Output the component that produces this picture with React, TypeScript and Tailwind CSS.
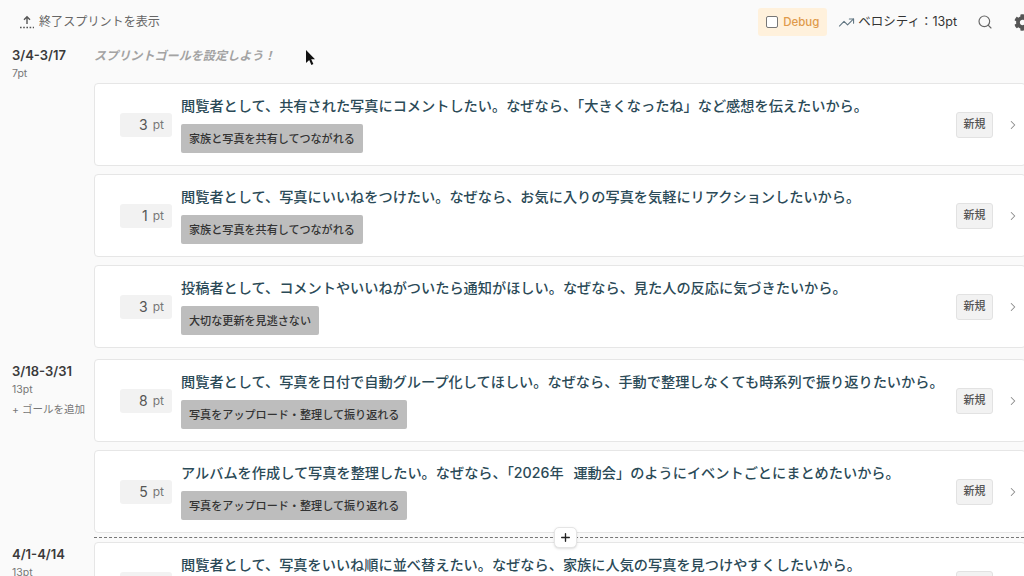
import { ChevronRight, Plus, Search, TrendingUp } from "lucide-react";
import { FaCog } from "react-icons/fa";

const FONT = "font-['Inter','Noto_Sans_CJK_JP',sans-serif]";

type Story = { pt: number; title: string; epic: string };
type Sprint = { range: string; total: string; goal?: string; addGoal?: boolean; stories: Story[] };

const FAMILY = "家族と写真を共有してつながれる";
const UPLOAD = "写真をアップロード・整理して振り返れる";

const sprints: Sprint[] = [
  {
    range: "3/4-3/17",
    total: "7pt",
    goal: "スプリントゴールを設定しよう！",
    stories: [
      { pt: 3, title: "閲覧者として、共有された写真にコメントしたい。なぜなら、「大きくなったね」など感想を伝えたいから。", epic: FAMILY },
      { pt: 1, title: "閲覧者として、写真にいいねをつけたい。なぜなら、お気に入りの写真を気軽にリアクションしたいから。", epic: FAMILY },
      { pt: 3, title: "投稿者として、コメントやいいねがついたら通知がほしい。なぜなら、見た人の反応に気づきたいから。", epic: "大切な更新を見逃さない" },
    ],
  },
  {
    range: "3/18-3/31",
    total: "13pt",
    addGoal: true,
    stories: [
      { pt: 8, title: "閲覧者として、写真を日付で自動グループ化してほしい。なぜなら、手動で整理しなくても時系列で振り返りたいから。", epic: UPLOAD },
      { pt: 5, title: "アルバムを作成して写真を整理したい。なぜなら、「2026年 運動会」のようにイベントごとにまとめたいから。", epic: UPLOAD },
    ],
  },
  {
    range: "4/1-4/14",
    total: "13pt",
    stories: [
      { pt: 3, title: "閲覧者として、写真をいいね順に並べ替えたい。なぜなら、家族に人気の写真を見つけやすくしたいから。", epic: FAMILY },
    ],
  },
];

function StoryCard({ story }: { story: Story }) {
  return (
    <div className="flex h-[83px] w-[932px] shrink-0 items-center rounded-[4px] border border-[#e6e6e6] bg-white pl-[25px] pr-[5px]">
      <div className="flex h-[24px] w-[52px] shrink-0 items-center justify-end gap-[5px] rounded-[3px] bg-[#f2f2f2] pr-[8px] text-[#555]">
        <span className="text-[14px]">{story.pt}</span>
        <span className="text-[12px] text-[#777]">pt</span>
      </div>
      <div className="ml-[9px] flex min-w-0 flex-1 flex-col items-start gap-[8px]">
        <p className="whitespace-nowrap text-[14.2px] leading-[20px] font-medium text-[#2b4a57] [word-spacing:6px]">{story.title}</p>
        <span className="rounded-[2px] bg-[#bdbdbd] px-[8px] py-[6.5px] text-[11.1px] leading-[16px] font-medium text-[#333]">
          {story.epic}
        </span>
      </div>
      <span className="flex h-[26px] w-[37px] shrink-0 items-center justify-center rounded-[3px] border border-[#e2e2e2] bg-[#f2f2f2] text-[11px] font-medium text-[#555]">
        新規
      </span>
      <ChevronRight className="ml-[13px] h-[14px] w-[14px] shrink-0 text-[#8a8a8a]" strokeWidth={1.75} />
    </div>
  );
}

function SprintRow({ sprint }: { sprint: Sprint }) {
  return (
    <section className="flex last:-mt-[2px]">
      <div className={`w-[94px] shrink-0 pl-[12px] ${sprint.goal ? "" : "pt-[2px]"}`}>
        <div className="text-[13px] leading-[20px] font-semibold text-[#3a3a3a]">{sprint.range}</div>
        <div className="mt-[1px] text-[10.5px] leading-[16px] text-[#777]">{sprint.total}</div>
        {sprint.addGoal && <div className="mt-[4px] text-[10.5px] leading-[16px] text-[#777]">+ ゴールを追加</div>}
      </div>
      <div className="flex flex-col gap-[8px]">
        {sprint.goal && (
          <div className="mb-[3px] h-[27px] pt-[3px] text-[12.1px] leading-[16px] font-semibold text-[#a3a3a3] italic">{sprint.goal}</div>
        )}
        {sprint.stories.map((s) => (
          <StoryCard key={s.title} story={s} />
        ))}
      </div>
    </section>
  );
}

function UploadIcon() {
  return (
    <svg width="16" height="16" viewBox="0 0 16 16" fill="none" stroke="#555" strokeWidth="1.4">
      <path d="M8 10V3M5 5.8 8 2.8l3 3" />
      <path d="M1 13.5h14" strokeDasharray="1.6 1.6" />
    </svg>
  );
}

export default function App() {
  return (
    <div className={`${FONT} relative h-[576px] w-[1024px] overflow-hidden bg-[#fafafa]`}>
      <header className="flex h-[44px] items-center pl-[19px]">
        <button className="flex items-center gap-[4px] text-[12.1px] text-[#666]">
          <UploadIcon />
          終了スプリントを表示
        </button>
        <div className="ml-auto flex items-center">
          <label className="flex h-[28px] w-[69px] items-center gap-[5px] rounded-[3px] bg-[#fff1dc] pl-[8px] text-[11.5px] font-medium text-[#e09a4a]">
            <span className="h-[12px] w-[12px] rounded-[2px] border border-[#777] bg-white" />
            <span className="pt-[1px]">Debug</span>
          </label>
          <TrendingUp className="ml-[11px] h-[17px] w-[17px] text-[#5f7480]" strokeWidth={1.5} />
          <span className="ml-[3px] pt-[1px] text-[12.5px] text-[#333]">ベロシティ：13pt</span>
          <Search className="ml-[20px] h-[16px] w-[16px] text-[#666]" strokeWidth={1.75} />
          <FaCog className="mr-[-7px] ml-[21px] h-[17px] w-[17px] text-[#555]" />
        </div>
      </header>
      <main className="flex w-[1034px] flex-col gap-[11px] pt-[1px]">
        {sprints.map((s) => (
          <SprintRow key={s.range} sprint={s} />
        ))}
      </main>
      <div className="absolute top-[537px] right-0 left-[94px] border-t border-dashed border-[#777]" />
      <button className="absolute top-[527px] left-[554px] flex h-[21px] w-[23px] items-center justify-center rounded-[5px] border border-[#e5e5e5] bg-white shadow-sm">
        <Plus className="h-[13px] w-[13px] text-[#222]" strokeWidth={2.5} />
      </button>
      <svg className="absolute top-[49px] left-[305px]" width="13" height="18" viewBox="0 0 13 18">
        <path d="M1 1v13l3.2-3 2.2 5 2-1-2.2-4.8H10z" fill="#111" />
      </svg>
    </div>
  );
}
